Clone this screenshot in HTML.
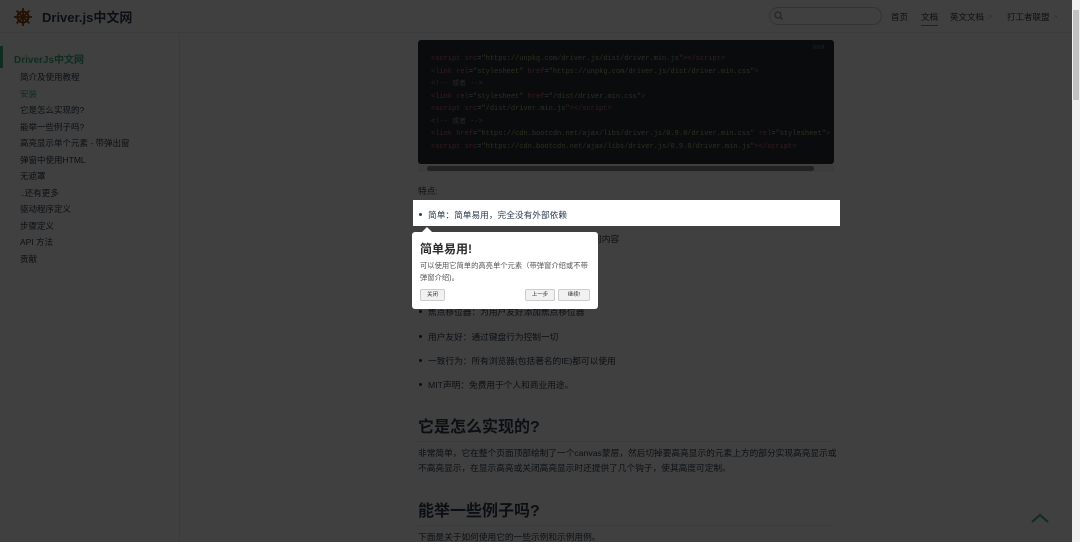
<!DOCTYPE html><html><head><meta charset="utf-8"><style>
*{margin:0;padding:0;box-sizing:border-box}
body{width:1080px;height:542px;overflow:hidden;background:#fff;font-family:"Liberation Sans","Noto Sans CJK SC",sans-serif;color:#2c3e50;position:relative}
.hdr{position:absolute;left:0;top:0;width:1072px;height:33px;border-bottom:1px solid #eaecef}
.logo{position:absolute;left:42px;top:7px;font-size:13px;font-weight:bold;color:#2c3e50}
.nav{position:absolute;top:11px;font-size:8.5px;color:#2c3e50}
.search{position:absolute;left:769px;top:7px;width:113px;height:18px;border:1px solid #ccc;border-radius:9px}
.side{position:absolute;left:0;top:33px;width:180px;height:509px;border-right:1px solid #eaecef}
.side .t{position:absolute;left:14px;top:18px;font-size:10px;font-weight:bold;color:#3eaf7c}
.side .bar{position:absolute;left:0;top:13px;width:3px;height:22px;background:#3eaf7c}
.side .i{position:absolute;left:20px;font-size:8.5px;color:#2c3e50}
.code{position:absolute;left:418px;top:40px;width:416px;height:124px;background:#282c34;border-radius:3px;font-family:"Liberation Mono",monospace;font-size:7px;color:#9cdcfe;padding:13px 0 0 13px;line-height:12.5px;white-space:pre}
.tg{color:#e06c75}.at{color:#e06c75}.st{color:#98c379}.cm{color:#999}
.c{position:absolute;left:418px;font-size:8.7px;color:#2c3e50}
.li{position:absolute;left:428px;font-size:8.7px;color:#2c3e50}
.li:before{content:"";position:absolute;left:-9px;top:5px;width:3px;height:3px;border-radius:50%;background:#2c3e50}
h2{position:absolute;left:418px;font-size:16px;font-weight:bold;color:#2c3e50;width:416px;border-bottom:1px solid #eaecef;padding-bottom:4px}
.ov{position:absolute;left:0;top:0;width:1072px;height:542px;background:rgba(0,0,0,0.75)}
.hl{position:absolute;left:413px;top:200px;width:427px;height:26px;background:#fff}
.pop{position:absolute;left:412px;top:232px;width:186px;height:77px;background:#fff;border-radius:3px;padding:8px 8px}
.pop:before{content:"";position:absolute;left:10px;top:-5px;border:5px solid transparent;border-top:0;border-bottom-color:#fff}
.btn{position:absolute;top:57px;height:12px;font-size:5.5px;line-height:11px;text-align:center;background:#f1f1f1;border:1px solid #ccc;border-radius:2px;color:#333}
.sb{position:absolute;left:1072px;top:0;width:8px;height:542px;background:#f1f1f1}
</style></head><body>
<div class="hdr">
<svg style="position:absolute;left:14px;top:8px" width="18" height="18" viewBox="0 0 18 18"><circle cx="9" cy="9" r="5.5" fill="none" stroke="#8b4513" stroke-width="2"/><circle cx="9" cy="9" r="2" fill="#8b4513"/><g stroke="#8b4513" stroke-width="1.8"><path d="M9 0V18M0 9H18M2.6 2.6L15.4 15.4M15.4 2.6L2.6 15.4"/></g></svg>
<div class="logo">Driver.js中文网</div>
<div class="search"></div>
<svg style="position:absolute;left:774px;top:11px" width="9" height="9"><circle cx="4" cy="4" r="3" fill="none" stroke="#999" stroke-width="1.3"/><path d="M6 6L8.5 8.5" stroke="#999" stroke-width="1.3"/></svg>
<div class="nav" style="left:891px">首页</div>
<div class="nav" style="left:921px;border-bottom:1.5px solid #3eaf7c;padding-bottom:2px">文档</div>
<div class="nav" style="left:950px">英文文档 <span style="color:#aaa;font-size:6px">↗</span></div>
<div class="nav" style="left:1007px">打工者联盟 <span style="color:#aaa;font-size:6px">↗</span></div>
</div>
<div class="side"><div class="bar"></div><div class="t">DriverJs中文网</div>
<div class="i" style="top:38px">简介及使用教程</div>
<div class="i" style="top:55px;color:#3eaf7c">安装</div>
<div class="i" style="top:71px">它是怎么实现的?</div>
<div class="i" style="top:88px">能举一些例子吗?</div>
<div class="i" style="top:104px">高亮显示单个元素 - 带弹出窗</div>
<div class="i" style="top:121px">弹窗中使用HTML</div>
<div class="i" style="top:137px">无遮罩</div>
<div class="i" style="top:154px">..还有更多</div>
<div class="i" style="top:170px">驱动程序定义</div>
<div class="i" style="top:187px">步骤定义</div>
<div class="i" style="top:203px">API 方法</div>
<div class="i" style="top:220px">贡献</div>
</div>
<div class="code"><span class="tg">&lt;script</span> <span class="at">src</span>=<span class="st">"https://unpkg.com/driver.js/dist/driver.min.js"</span><span class="tg">&gt;&lt;/script&gt;</span>
<span class="tg">&lt;link</span> <span class="at">rel</span>=<span class="st">"stylesheet"</span> <span class="at">href</span>=<span class="st">"https://unpkg.com/driver.js/dist/driver.min.css"</span><span class="tg">&gt;</span>
<span class="cm">&lt;!-- 或者 --&gt;</span>
<span class="tg">&lt;link</span> <span class="at">rel</span>=<span class="st">"stylesheet"</span> <span class="at">href</span>=<span class="st">"/dist/driver.min.css"</span><span class="tg">&gt;</span>
<span class="tg">&lt;script</span> <span class="at">src</span>=<span class="st">"/dist/driver.min.js"</span><span class="tg">&gt;&lt;/script&gt;</span>
<span class="cm">&lt;!-- 或者 --&gt;</span>
<span class="tg">&lt;link</span> <span class="at">href</span>=<span class="st">"https://cdn.bootcdn.net/ajax/libs/driver.js/0.9.8/driver.min.css"</span> <span class="at">rel</span>=<span class="st">"stylesheet"</span><span class="tg">&gt;</span>
<span class="tg">&lt;script</span> <span class="at">src</span>=<span class="st">"https://cdn.bootcdn.net/ajax/libs/driver.js/0.9.8/driver.min.js"</span><span class="tg">&gt;&lt;/script&gt;</span></div>
<div style="position:absolute;left:813px;top:45px;font-size:6px;color:#888">html</div>
<div style="position:absolute;left:418px;top:165px;width:416px;height:7px;background:#f1f1f1"><div style="position:absolute;left:9px;top:1px;width:387px;height:5px;background:#888;border-radius:3px"></div></div>
<div class="c" style="top:184px">特点:</div>
<div class="li" style="top:232px">高亮显示任何元素：无论你希望突出显示任何内容</div>
<div class="li" style="top:256px">功能介绍：引导用户了解页面上的任意)</div>
<div class="li" style="top:281px">自定义：为你的Web应用创建功能介绍</div>
<div class="li" style="top:305px">焦点移位器：为用户友好添加焦点移位器</div>
<div class="li" style="top:330px">用户友好：通过键盘行为控制一切</div>
<div class="li" style="top:354px">一致行为：所有浏览器(包括著名的IE)都可以使用</div>
<div class="li" style="top:378px">MIT声明：免费用于个人和商业用途。</div>
<h2 style="top:413px">它是怎么实现的?</h2>
<div class="c" style="top:446px;width:420px;line-height:15px">非常简单，它在整个页面顶部绘制了一个canvas蒙层，然后切掉要高亮显示的元素上方的部分实现高亮显示或不高亮显示，在显示高亮或关闭高亮显示时还提供了几个钩子，使其高度可定制。</div>
<h2 style="top:497px">能举一些例子吗?</h2>
<div class="c" style="top:530px">下面是关于如何使用它的一些示例和示例用例。</div>
<svg style="position:absolute;left:1030px;top:512px" width="20" height="12"><path d="M2 10L10 3L18 10" fill="none" stroke="#3eaf7c" stroke-width="2"/></svg>
<div class="ov"></div>
<div class="hl"><div class="li" style="top:8px;left:15px">简单：简单易用，完全没有外部依赖</div></div>
<div class="pop"><div style="font-size:12px;font-weight:bold;color:#2d2d2d">简单易用!</div>
<div style="font-size:7.3px;line-height:12px;color:#555;margin-top:3px">可以使用它简单的高亮单个元素（带弹窗介绍或不带弹窗介绍)。</div>
<div class="btn" style="left:8px;width:25px">关闭</div>
<div class="btn" style="left:113px;width:30px">上一步</div>
<div class="btn" style="left:146px;width:32px">继续!</div></div>
<div class="sb"><div style="position:absolute;left:1px;top:10px;width:6px;height:90px;background:#c1c1c1"></div></div>
</body></html>
